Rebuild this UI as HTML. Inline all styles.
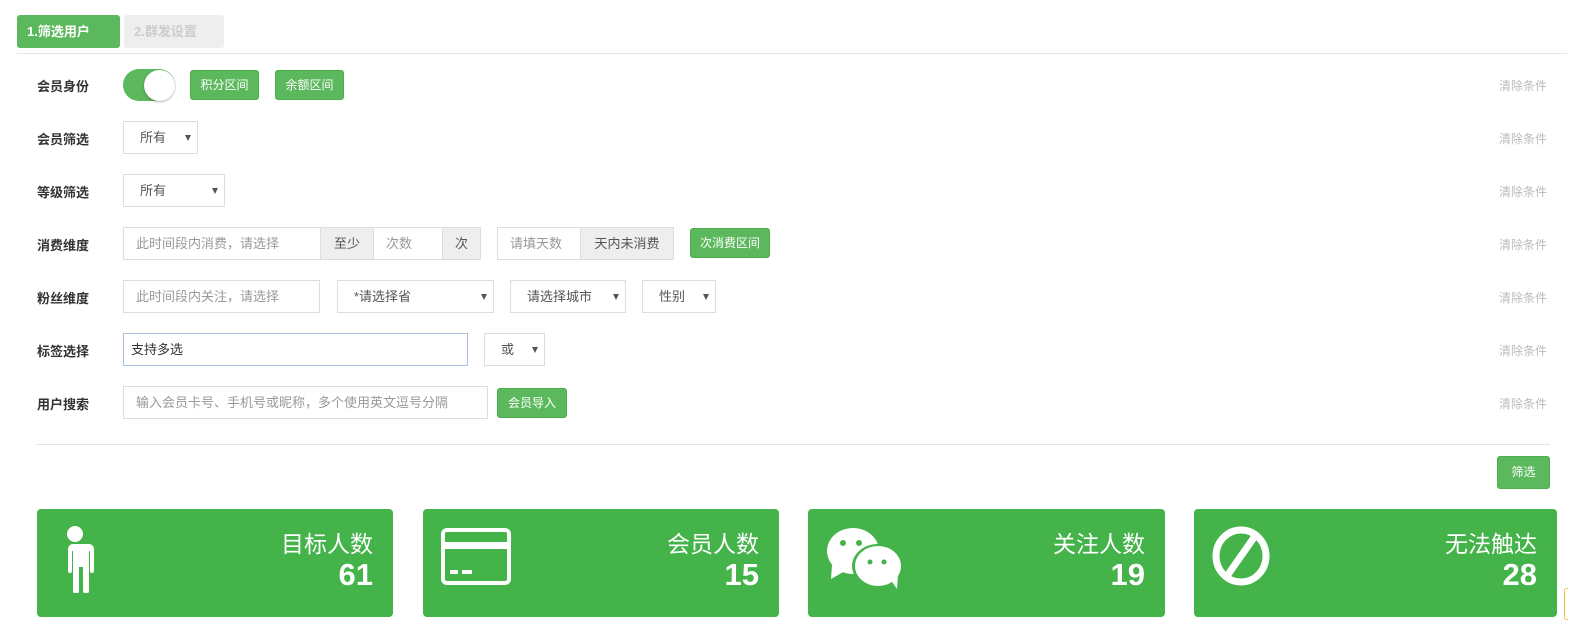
<!DOCTYPE html>
<html><head><meta charset="utf-8"><style>
*{margin:0;padding:0;box-sizing:border-box}
body{width:1591px;height:635px;background:#fff;position:relative;overflow:hidden;font-family:"Liberation Sans","Noto Sans CJK SC",sans-serif;font-size:13px;color:#555}
.a{position:absolute}
.tab{top:15px;height:33px;line-height:33px;font-size:13px;font-weight:bold;padding-left:10px;border-radius:3px}
.lbl{left:37px;font-weight:bold;color:#333;font-size:13px}
.clr{left:1499px;color:#bbb;font-size:12px}
.btn{background:#5cb85c;border:1px solid #4cae4c;color:#fff;border-radius:3px;font-size:12px;text-align:center}
.inp{border:1px solid #ddd;background:#fff;color:#999;padding-left:12px;height:33px;line-height:31px}
.add{background:#eee;border:1px solid #ddd;color:#555;text-align:center;height:33px;line-height:31px}
.sel{border:1px solid #ddd;background:#fff;color:#555;height:33px;line-height:31px;padding-left:16px}
.sel:after{content:"";position:absolute;right:6px;top:13px;border-left:3.5px solid transparent;border-right:3.5px solid transparent;border-top:6px solid #555}
.card{top:509px;height:108px;background:#44b34a;border-radius:4px;color:#fff}
.card .t{position:absolute;right:20px;top:16px;font-size:23px}
.card .n{position:absolute;right:20px;top:48px;font-size:31px;font-weight:bold}
</style></head><body>
<div class="a tab" style="left:17px;width:103px;background:#5cb85c;color:#fff">1.筛选用户</div>
<div class="a tab" style="left:124px;width:100px;background:#eee;color:#ccc">2.群发设置</div>
<div class="a" style="left:17px;top:53px;width:1550px;height:1px;background:#e5e5e5"></div>

<div class="a lbl" style="top:76px">会员身份</div>
<div class="a" style="left:123px;top:69px;width:52px;height:32px;border-radius:16px;background:#5cb85c"></div>
<div class="a" style="left:144px;top:70px;width:31px;height:31px;border-radius:50%;background:#fff;box-shadow:0 1px 2px rgba(0,0,0,.3)"></div>
<div class="a btn" style="left:190px;top:70px;width:69px;height:30px;line-height:28px">积分区间</div>
<div class="a btn" style="left:275px;top:70px;width:69px;height:30px;line-height:28px">余额区间</div>

<div class="a lbl" style="top:129px">会员筛选</div>
<div class="a sel" style="left:123px;top:121px;width:75px">所有</div>
<div class="a lbl" style="top:182px">等级筛选</div>
<div class="a sel" style="left:123px;top:174px;width:102px">所有</div>

<div class="a lbl" style="top:235px">消费维度</div>
<div class="a inp" style="left:123px;top:227px;width:198px">此时间段内消费，请选择</div>
<div class="a add" style="left:320px;top:227px;width:54px">至少</div>
<div class="a inp" style="left:373px;top:227px;width:70px">次数</div>
<div class="a add" style="left:442px;top:227px;width:39px">次</div>
<div class="a inp" style="left:497px;top:227px;width:84px">请填天数</div>
<div class="a add" style="left:580px;top:227px;width:94px">天内未消费</div>
<div class="a btn" style="left:690px;top:228px;width:80px;height:30px;line-height:28px">次消费区间</div>

<div class="a lbl" style="top:288px">粉丝维度</div>
<div class="a inp" style="left:123px;top:280px;width:197px">此时间段内关注，请选择</div>
<div class="a sel" style="left:337px;top:280px;width:157px">*请选择省</div>
<div class="a sel" style="left:510px;top:280px;width:116px">请选择城市</div>
<div class="a sel" style="left:642px;top:280px;width:74px">性别</div>

<div class="a lbl" style="top:341px">标签选择</div>
<div class="a inp" style="left:123px;top:333px;width:345px;border-color:#a9c1dc;color:#333;padding-left:7px">支持多选</div>
<div class="a sel" style="left:484px;top:333px;width:61px">或</div>

<div class="a lbl" style="top:394px">用户搜索</div>
<div class="a inp" style="left:123px;top:386px;width:365px">输入会员卡号、手机号或昵称，多个使用英文逗号分隔</div>
<div class="a btn" style="left:497px;top:388px;width:70px;height:30px;line-height:28px">会员导入</div>

<div class="a clr" style="top:77px">清除条件</div>
<div class="a clr" style="top:130px">清除条件</div>
<div class="a clr" style="top:183px">清除条件</div>
<div class="a clr" style="top:236px">清除条件</div>
<div class="a clr" style="top:289px">清除条件</div>
<div class="a clr" style="top:342px">清除条件</div>
<div class="a clr" style="top:395px">清除条件</div>

<div class="a" style="left:37px;top:444px;width:1513px;height:1px;background:#e5e5e5"></div>
<div class="a btn" style="left:1497px;top:456px;width:53px;height:33px;line-height:31px">筛选</div>

<div class="a card" style="left:37px;width:356px">
<svg class="a" style="left:16px;top:16px" width="44" height="68" viewBox="0 0 44 68"><circle cx="22" cy="9" r="8" fill="#fff"/><path d="M8 19h28a5 5 0 0 1 5 5v22a2 2 0 0 1-4 0v-20h-1v40a3 3 0 0 1-6 0v-24h-4v24a3 3 0 0 1-6 0v-40h-1v20a2 2 0 0 1-4 0v-22a5 5 0 0 1 5-5z" fill="#fff"/></svg>
<div class="t">目标人数</div><div class="n">61</div></div>
<div class="a card" style="left:423px;width:356px">
<svg class="a" style="left:18px;top:19px" width="70" height="57" viewBox="0 0 70 57"><rect x="2" y="2" width="66" height="53" rx="4" fill="none" stroke="#fff" stroke-width="4"/><rect x="2" y="14" width="66" height="7" fill="#fff"/><rect x="9" y="42" width="8" height="4" fill="#fff"/><rect x="21" y="42" width="10" height="4" fill="#fff"/></svg>
<div class="t">会员人数</div><div class="n">15</div></div>
<div class="a card" style="left:808px;width:357px">
<svg class="a" style="left:18px;top:18px" width="78" height="62" viewBox="0 0 78 62"><ellipse cx="27" cy="24" rx="26" ry="23" fill="#fff"/><path d="M6 38l-1 14 14-8z" fill="#fff"/><ellipse cx="52" cy="39" rx="26" ry="22" fill="#44b34a"/><ellipse cx="52" cy="39" rx="23" ry="20" fill="#fff"/><path d="M64 52l7 10 1-14z" fill="#fff"/><circle cx="17" cy="16" r="3" fill="#44b34a"/><circle cx="33" cy="16" r="3" fill="#44b34a"/><circle cx="44" cy="35" r="2.5" fill="#44b34a"/><circle cx="58" cy="35" r="2.5" fill="#44b34a"/></svg>
<div class="t">关注人数</div><div class="n">19</div></div>
<div class="a card" style="left:1194px;width:363px">
<svg class="a" style="left:18px;top:17px" width="58" height="60" viewBox="0 0 58 60"><ellipse cx="29" cy="30" rx="25" ry="26" fill="none" stroke="#fff" stroke-width="7"/><line x1="43" y1="10" x2="15" y2="50" stroke="#fff" stroke-width="7"/></svg>
<div class="t">无法触达</div><div class="n">28</div></div>
<div class="a" style="left:1564px;top:588px;width:4px;height:32px;border:1px solid #f0c040;border-right:none;border-radius:3px 0 0 3px"></div>
</body></html>
